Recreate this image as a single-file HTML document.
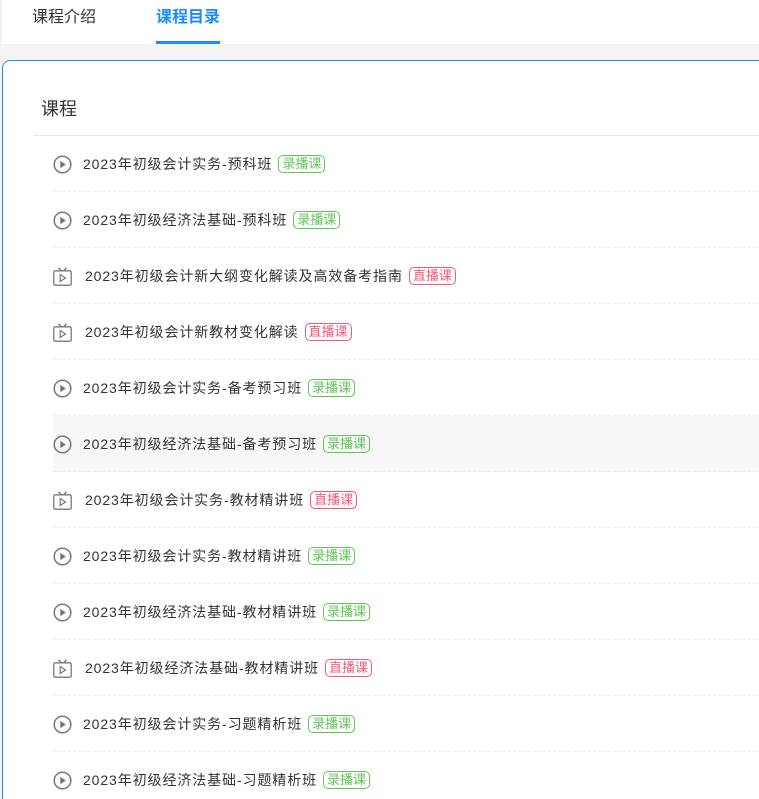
<!DOCTYPE html>
<html><head><meta charset="utf-8"><style>
*{margin:0;padding:0;box-sizing:border-box}
html,body{width:759px;height:799px;overflow:hidden}
body{background:#f4f4f4;font-family:"Liberation Sans","Noto Sans CJK SC",sans-serif;position:relative}
.tabs{position:absolute;left:2px;top:0;width:757px;height:44px;background:#fff}
.tab{position:absolute;top:7px;font-size:16px;line-height:22px;color:#333}
.t1{left:30px}
.t2{left:154px;color:#1a8cfe;font-weight:bold}
.ul{position:absolute;left:154px;top:41px;width:64px;height:3px;background:#1a8cfe}
.card{position:absolute;left:2px;top:60px;width:770px;height:800px;background:#fff;border:1px solid #1a8cfe;border-radius:8px}
.h{position:absolute;left:38px;top:36px;font-size:18px;color:#333;line-height:24px}
.hr{position:absolute;left:31px;top:74px;right:0;height:1px;background:#e4e4e4}
.list{position:absolute;left:50px;top:75px;right:0}
.row{height:56px;position:relative;border-bottom:1px dashed #ececec;display:flex;align-items:center}
.row.hl{background:#f7f7f7}
.row svg{position:absolute;left:0;top:19px}
.txt{position:absolute;left:30px;font-size:14px;letter-spacing:0.9px;color:#333;white-space:nowrap;display:flex;align-items:center}
.b{display:inline-block;margin-left:6px;height:18px;line-height:16px;padding:0 3px;font-size:13px;letter-spacing:0;border:1px solid;border-radius:5px}
.g{color:#62c45a;border-color:#62c45a}
.r{color:#f25a7c;border-color:#f25a7c}
</style></head><body>
<div class="tabs"><div class="tab t1">课程介绍</div><div class="tab t2">课程目录</div><div class="ul"></div></div>
<div class="card">
<div class="h">课程</div><div class="hr"></div>
<div class="list">
<div class="row"><svg width="19" height="19" viewBox="0 0 19 19"><circle cx="9.5" cy="9.5" r="8.3" fill="none" stroke="#777" stroke-width="1.5"/><path d="M7.3 5.8L12.8 9.5L7.3 13.2Z" fill="#777"/></svg><span class="txt">2023年初级会计实务-预科班<span class="b g">录播课</span></span></div>
<div class="row"><svg width="19" height="19" viewBox="0 0 19 19"><circle cx="9.5" cy="9.5" r="8.3" fill="none" stroke="#777" stroke-width="1.5"/><path d="M7.3 5.8L12.8 9.5L7.3 13.2Z" fill="#777"/></svg><span class="txt">2023年初级经济法基础-预科班<span class="b g">录播课</span></span></div>
<div class="row"><svg width="19" height="19" viewBox="0 0 19 19"><path d="M5.5 0.8L8 3.5M13.5 0.8L11 3.5" stroke="#777" stroke-width="1.3" fill="none"/><rect x="0.8" y="3.8" width="17.4" height="14.4" rx="1.5" fill="none" stroke="#777" stroke-width="1.3"/><path d="M7.2 7.5L12.5 11L7.2 14.5Z" fill="none" stroke="#777" stroke-width="1.2"/></svg><span class="txt" style="left:32px">2023年初级会计新大纲变化解读及高效备考指南<span class="b r">直播课</span></span></div>
<div class="row"><svg width="19" height="19" viewBox="0 0 19 19"><path d="M5.5 0.8L8 3.5M13.5 0.8L11 3.5" stroke="#777" stroke-width="1.3" fill="none"/><rect x="0.8" y="3.8" width="17.4" height="14.4" rx="1.5" fill="none" stroke="#777" stroke-width="1.3"/><path d="M7.2 7.5L12.5 11L7.2 14.5Z" fill="none" stroke="#777" stroke-width="1.2"/></svg><span class="txt" style="left:32px">2023年初级会计新教材变化解读<span class="b r">直播课</span></span></div>
<div class="row"><svg width="19" height="19" viewBox="0 0 19 19"><circle cx="9.5" cy="9.5" r="8.3" fill="none" stroke="#777" stroke-width="1.5"/><path d="M7.3 5.8L12.8 9.5L7.3 13.2Z" fill="#777"/></svg><span class="txt">2023年初级会计实务-备考预习班<span class="b g">录播课</span></span></div>
<div class="row hl"><svg width="19" height="19" viewBox="0 0 19 19"><circle cx="9.5" cy="9.5" r="8.3" fill="none" stroke="#777" stroke-width="1.5"/><path d="M7.3 5.8L12.8 9.5L7.3 13.2Z" fill="#777"/></svg><span class="txt">2023年初级经济法基础-备考预习班<span class="b g">录播课</span></span></div>
<div class="row"><svg width="19" height="19" viewBox="0 0 19 19"><path d="M5.5 0.8L8 3.5M13.5 0.8L11 3.5" stroke="#777" stroke-width="1.3" fill="none"/><rect x="0.8" y="3.8" width="17.4" height="14.4" rx="1.5" fill="none" stroke="#777" stroke-width="1.3"/><path d="M7.2 7.5L12.5 11L7.2 14.5Z" fill="none" stroke="#777" stroke-width="1.2"/></svg><span class="txt" style="left:32px">2023年初级会计实务-教材精讲班<span class="b r">直播课</span></span></div>
<div class="row"><svg width="19" height="19" viewBox="0 0 19 19"><circle cx="9.5" cy="9.5" r="8.3" fill="none" stroke="#777" stroke-width="1.5"/><path d="M7.3 5.8L12.8 9.5L7.3 13.2Z" fill="#777"/></svg><span class="txt">2023年初级会计实务-教材精讲班<span class="b g">录播课</span></span></div>
<div class="row"><svg width="19" height="19" viewBox="0 0 19 19"><circle cx="9.5" cy="9.5" r="8.3" fill="none" stroke="#777" stroke-width="1.5"/><path d="M7.3 5.8L12.8 9.5L7.3 13.2Z" fill="#777"/></svg><span class="txt">2023年初级经济法基础-教材精讲班<span class="b g">录播课</span></span></div>
<div class="row"><svg width="19" height="19" viewBox="0 0 19 19"><path d="M5.5 0.8L8 3.5M13.5 0.8L11 3.5" stroke="#777" stroke-width="1.3" fill="none"/><rect x="0.8" y="3.8" width="17.4" height="14.4" rx="1.5" fill="none" stroke="#777" stroke-width="1.3"/><path d="M7.2 7.5L12.5 11L7.2 14.5Z" fill="none" stroke="#777" stroke-width="1.2"/></svg><span class="txt" style="left:32px">2023年初级经济法基础-教材精讲班<span class="b r">直播课</span></span></div>
<div class="row"><svg width="19" height="19" viewBox="0 0 19 19"><circle cx="9.5" cy="9.5" r="8.3" fill="none" stroke="#777" stroke-width="1.5"/><path d="M7.3 5.8L12.8 9.5L7.3 13.2Z" fill="#777"/></svg><span class="txt">2023年初级会计实务-习题精析班<span class="b g">录播课</span></span></div>
<div class="row"><svg width="19" height="19" viewBox="0 0 19 19"><circle cx="9.5" cy="9.5" r="8.3" fill="none" stroke="#777" stroke-width="1.5"/><path d="M7.3 5.8L12.8 9.5L7.3 13.2Z" fill="#777"/></svg><span class="txt">2023年初级经济法基础-习题精析班<span class="b g">录播课</span></span></div>
</div></div>
</body></html>
